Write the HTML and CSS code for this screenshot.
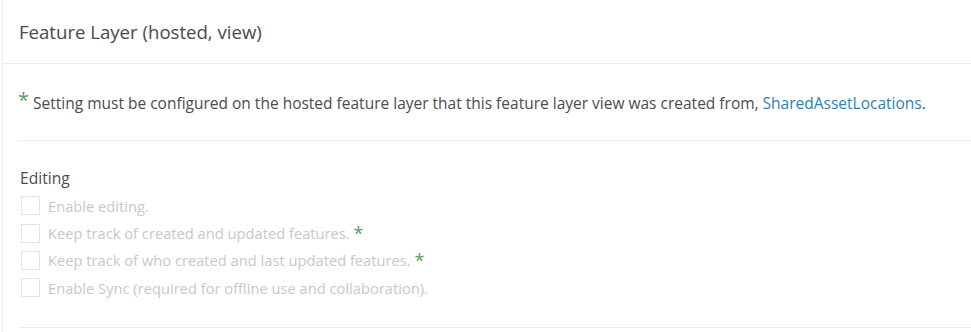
FILE: index.html
```html
<!DOCTYPE html>
<html>
<head>
<meta charset="utf-8">
<link rel="stylesheet" href="styles.css">
</head>
<body>
<div class="panel">
  <div class="header">Feature Layer (hosted, view)</div>
  <div class="body">
    <div class="note"><span class="star">*</span> Setting must be configured on the hosted feature layer that this feature layer view was created from, <a class="link" href="#">SharedAssetLocations</a>.</div>
    <div class="section">
      <div class="section-title">Editing</div>
      <label class="opt"><span class="box"></span>Enable editing.</label>
      <label class="opt"><span class="box"></span>Keep track of created and updated features. <span class="star small">*</span></label>
      <label class="opt"><span class="box"></span>Keep track of who created and last updated features. <span class="star small">*</span></label>
      <label class="opt"><span class="box"></span>Enable Sync (required for offline use and collaboration).</label>
    </div>
  </div>
</div>
</body>
</html>
```
FILE: styles.css
```css
html, body { margin: 0; padding: 0; background: #fff; }
body { font-family: "Open Sans", "Lato", sans-serif; color: #4c4c4c; overflow: hidden; }
.panel {
  margin-left: 2px;
  border-left: 1px solid #ececec;
  height: 332px;
}
.header {
  font-size: 18.6px;
  height: 63px;
  line-height: 63px;
  padding-left: 16px;
  border-bottom: 1px solid #ececec;
  color: #4a4a4a;
}
.body { padding-left: 15px; }
.note {
  font-size: 15.5px;
  padding-top: 20px;
  height: 56px;
  border-bottom: 1px solid #ececec;
  line-height: 32px;
  white-space: nowrap;
}
.star { color: #5c9b63; font-size: 20px; vertical-align: 2px; }
.star.small { font-size: 18px; vertical-align: 0; }
.link { color: #2d82b5; text-decoration: none; }
.section {
  padding-top: 26px;
  height: 160px;
  border-bottom: 1px solid #ececec;
}
.section-title { font-size: 15.6px; line-height: 22px; margin-left: 2px; margin-bottom: 3px; }
.opt {
  display: flex;
  align-items: center;
  height: 27.4px;
  font-size: 14.7px;
  color: #c8c8c8;
  white-space: pre;
}
.box {
  width: 19px; height: 19px;
  border: 1px solid #e4e4e4;
  box-sizing: border-box;
  margin-left: 3px;
  margin-right: 8px;
  flex: none;
}
```
